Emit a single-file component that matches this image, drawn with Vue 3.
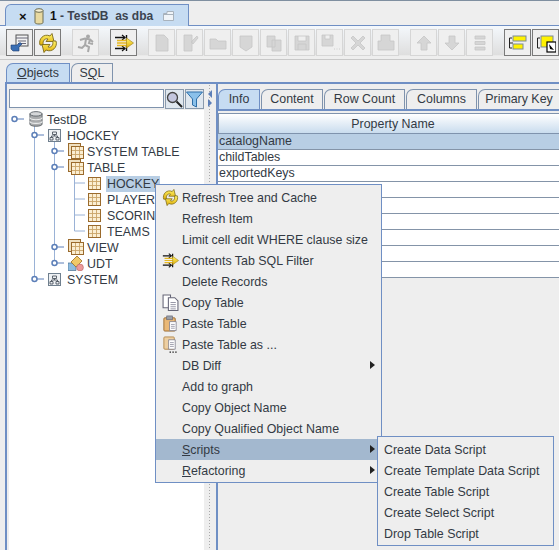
<template>
  <div class="app">
    <svg class="defs" width="0" height="0">
      <defs>
        <linearGradient id="gold" x1="0" y1="0" x2="0" y2="1">
          <stop offset="0" stop-color="#fff46a" />
          <stop offset="1" stop-color="#e0ae08" />
        </linearGradient>
        <symbol id="i-refresh" viewBox="0 0 20 20">
          <path d="M2 12 C0 6 6 0 12 3 L14 0.5 L16 8.5 L8 8.5 L10 6 C7 5 4 8 5.5 12 Z" fill="url(#gold)" stroke="#7d6a18" stroke-width=".9" />
          <path d="M18 8 C20 14 14 20 8 17 L6 19.5 L4 11.5 L12 11.5 L10 14 C13 15 16 12 14.5 8 Z" fill="url(#gold)" stroke="#7d6a18" stroke-width=".9" />
        </symbol>
        <symbol id="i-filter" viewBox="0 0 20 20">
          <path d="M1 4.5 H11 M1 15.5 H11 M12.5 2 V7 M12.5 13 V18" stroke="#111" stroke-width="1.4" />
          <path d="M8 2 L11 4.5 L8 7 M8 13 L11 15.5 L8 18" fill="none" stroke="#111" stroke-width="1.2" />
          <path d="M3 7.5 H13 M3 10 H13 M3 12.5 H13" stroke="#e8b820" stroke-width="1.3" />
          <path d="M12.5 5 L19.5 10 L12.5 15 Z" fill="url(#gold)" stroke="#a88a20" stroke-width=".7" />
        </symbol>
        <symbol id="i-db" viewBox="0 0 15 17">
          <path d="M1 3 V14 C1 17 14 17 14 14 V3 Z" fill="#a9abad" stroke="#60666c" />
          <ellipse cx="7.5" cy="3" rx="6.5" ry="2.4" fill="#d5d7d9" stroke="#60666c" />
          <path d="M1 7 C1 10 14 10 14 7 M1 11 C1 14 14 14 14 11" fill="none" stroke="#eceded" stroke-width="1.2" />
        </symbol>
        <symbol id="i-schema" viewBox="0 0 13 13">
          <rect x=".5" y=".5" width="12" height="12" fill="#eef1f4" stroke="#6f7f8e" />
          <path d="M4.5 3 H8.5 V5.5 H4.5 Z M2 8.5 H5 V11 H2 Z M8 8.5 H11 V11 H8 Z M6.5 5.5 V7 M3.5 8.5 V7 H9.5 V8.5" fill="none" stroke="#4d5660" stroke-width=".9" />
        </symbol>
        <symbol id="i-table" viewBox="0 0 13 13">
          <rect x=".5" y=".5" width="12" height="12" fill="#fbeed2" stroke="#9a6a2c" />
          <path d="M4.5 1 V12 M8.5 1 V12 M1 4.5 H12 M1 8.5 H12" stroke="#c9a468" stroke-width=".9" />
        </symbol>
        <symbol id="i-tables" viewBox="0 0 16 16">
          <rect x=".5" y=".5" width="12" height="12" fill="#efe0c0" stroke="#9a6a2c" />
          <rect x="3.5" y="3.5" width="12" height="12" fill="#fbeed2" stroke="#9a6a2c" />
          <path d="M7.5 4 V15 M11.5 4 V15 M4 7.5 H15 M4 11.5 H15" stroke="#c9a468" stroke-width=".9" />
        </symbol>
        <symbol id="i-udt" viewBox="0 0 16 16">
          <path d="M0 8 H8 V15.5 H0 Z" fill="#8fbce0" stroke="#49708f" stroke-width=".7" />
          <path d="M3 7 L9 1 L14 6 L8 12 Z" fill="#f0c868" stroke="#9a6d20" stroke-width=".8" />
          <circle cx="12" cy="12.5" r="3.4" fill="#ec9a9a" stroke="#b86363" stroke-width=".6" />
        </symbol>
        <symbol id="i-copy" viewBox="0 0 16 16">
          <path d="M1 1 H8 V13 H1 Z" fill="#fff" stroke="#667" />
          <path d="M6 3.5 H12 L15 6.5 V15.5 H6 Z" fill="#fff" stroke="#667" />
          <path d="M8 8 H13 M8 10 H13 M8 12 H13 M8 14 H13" stroke="#889" stroke-width=".8" />
        </symbol>
        <symbol id="i-paste" viewBox="0 0 16 18">
          <rect x="1" y="3" width="12" height="14" rx="1" fill="#e9b877" stroke="#9b6b30" />
          <rect x="4" y="1" width="6" height="4" fill="#9aa0a8" stroke="#667" stroke-width=".7" />
          <path d="M7 7 H14 V16.5 H7 Z" fill="#fff" stroke="#778" stroke-width=".8" />
          <path d="M8.5 10 H12.5 M8.5 12 H12.5 M8.5 14 H12.5" stroke="#889" stroke-width=".8" />
        </symbol>
        <symbol id="i-pastedots" viewBox="0 0 16 18">
          <rect x="1" y="1" width="11" height="13" rx="1" fill="#edcfa2" stroke="#b58a50" />
          <path d="M6 4 H13 V14 H6 Z" fill="#fff" stroke="#778" stroke-width=".8" />
          <path d="M7.5 7 H11.5 M7.5 9 H11.5 M7.5 11 H11.5" stroke="#889" stroke-width=".8" />
          <path d="M7 17 H8.5 M10 17 H11.5 M13 17 H14.5" stroke="#222" stroke-width="1.4" />
        </symbol>
      </defs>
    </svg>

    <div class="doc-bar">
      <div class="doc-tab">
        <span class="doc-x">×</span>
        <svg class="doc-can" width="10" height="17" viewBox="0 0 10 17">
          <path d="M1 2.5 V14.5 C1 16.5 9 16.5 9 14.5 V2.5 Z" fill="#e8d9a0" stroke="#6d6d52" />
          <ellipse cx="5" cy="2.5" rx="4" ry="1.8" fill="#f7efd0" stroke="#6d6d52" />
        </svg>
        <span class="doc-title"><b>1</b> - TestDB&nbsp; as dba</span>
        <svg class="doc-float" width="11" height="10" viewBox="0 0 11 10">
          <path d="M.5 2.5 H4 V.5 H10.5 V9.5 H.5 Z M.5 3.5 H10.5" fill="#f0f4f8" stroke="#a8b2bc" />
        </svg>
      </div>
    </div>

    <div class="toolbar">
      <button class="tb"><svg width="20" height="20" viewBox="0 0 20 20">
        <rect x="6" y="2" width="12" height="11" fill="#f2f2f2" stroke="#555" />
        <path d="M6 5 H18 M8 8 H16 M8 10.5 H16" stroke="#667" />
        <path d="M1 12 H7 L10 9.5 L12 11 L9 14 V18 H3 L1 16 Z" fill="#3b6fb4" stroke="#1e3d6e" stroke-width=".6" />
      </svg></button>
      <button class="tb"><svg width="20" height="20"><use href="#i-refresh" /></svg></button>
      <span class="gap"></span>
      <button class="tb off"><svg width="20" height="20" viewBox="0 0 20 20">
        <circle cx="12" cy="3.5" r="2" fill="#a8a8a8" />
        <path d="M4 7 L9 5.5 L14 6.5 L17 9 M10 6 L9 12 L13 14 L12 19 M9 12 L6 15 L2 14 M14 7 L13 10 L17 11" fill="none" stroke="#a8a8a8" stroke-width="2" />
      </svg></button>
      <span class="gap"></span>
      <button class="tb"><svg width="20" height="20"><use href="#i-filter" /></svg></button>
      <span class="gap"></span>
      <button v-for="g in disabledA" :key="g" class="tb off">
        <svg width="20" height="20" viewBox="0 0 20 20"><path :d="g" fill="#d6d6d6" stroke="#c6c6c6" stroke-width=".8" /></svg>
      </button>
      <span class="gap"></span>
      <button v-for="g in disabledB" :key="g" class="tb off">
        <svg width="20" height="20" viewBox="0 0 20 20"><path :d="g" fill="#d6d6d6" stroke="#c6c6c6" stroke-width=".8" /></svg>
      </button>
      <span class="gap"></span>
      <button class="tb"><svg width="20" height="20" viewBox="0 0 20 20">
        <path d="M4 5 H1.5 V15 H4 M1.5 10 H5" fill="none" stroke="#222" />
        <rect x="5" y="3" width="13" height="5" fill="#fff200" stroke="#7d8a98" />
        <rect x="5" y="11" width="10" height="5" fill="#fff200" stroke="#7d8a98" />
      </svg></button>
      <button class="tb"><svg width="20" height="20" viewBox="0 0 20 20">
        <path d="M4 5 H1.5 V15 H4" fill="none" stroke="#222" />
        <rect x="5" y="3" width="12" height="11" fill="#fff200" stroke="#7d8a98" />
        <rect x="11" y="9" width="9" height="10" fill="#fff" stroke="#000" stroke-width="1.2" />
        <path d="M13 11 L18 17 L14 16 Z" fill="#000" />
      </svg></button>
    </div>

    <div class="obj-tabs">
      <div class="tab on obj"><u>O</u>bjects</div>
      <div class="tab sql">S<u>Q</u>L</div>
    </div>

    <div class="panel">
      <div class="left">
        <div class="search">
          <input class="search-input" type="text" />
          <button class="sbtn"><svg width="17" height="17" viewBox="0 0 17 17">
            <circle cx="6.5" cy="6.5" r="5" fill="#c3c6de" stroke="#444" stroke-width="1.3" />
            <path d="M10.5 10.5 L16 16" stroke="#222" stroke-width="2" />
          </svg></button>
          <button class="sbtn"><svg width="17" height="17" viewBox="0 0 17 17">
            <path d="M.5 1 H16.5 L10.5 8 V16 L6.5 14 V8 Z" fill="#8ac0ea" stroke="#2f6fa8" />
          </svg></button>
        </div>
        <div class="tree">
          <svg class="tree-lines" width="100" height="190" viewBox="0 0 100 190">
            <g fill="none" stroke="#9ab2d6">
              <path d="M25.5 9 V169 M45.5 25 V153 M65.5 57 V121 M65.5 73 H76 M65.5 89 H76 M65.5 105 H76 M65.5 121 H76" />
              <path d="M5.5 9 H15 M25.5 25 H35 M45.5 41 H55 M45.5 57 H55 M45.5 137 H55 M45.5 153 H55 M25.5 169 H35" stroke="#5c7fb8" />
            </g>
            <g fill="#fff" stroke="#5c7fb8" stroke-width="1.5">
              <circle cx="5.5" cy="9" r="2.5" />
              <circle cx="25.5" cy="25" r="2.5" />
              <circle cx="45.5" cy="41" r="2.5" />
              <circle cx="45.5" cy="57" r="2.5" />
              <circle cx="45.5" cy="137" r="2.5" />
              <circle cx="45.5" cy="153" r="2.5" />
              <circle cx="25.5" cy="169" r="2.5" />
            </g>
          </svg>
          <div v-for="n in nodes" :key="n.id" class="node" :class="'lv' + n.level">
            <svg class="node-icon" :class="'ic-' + n.icon"><use :href="'#i-' + n.icon" /></svg>
            <span class="node-label" :class="{ sel: n.selected }">{{ n.label }}</span>
          </div>
        </div>
      </div>

      <div class="splitter">
        <i class="arrow-l"></i>
        <i class="arrow-r"></i>
      </div>

      <div class="right">
        <div class="info-tabs">
          <div v-for="(t, i) in infoTabs" :key="t.label" class="tab" :class="{ on: i === 0 }" :style="{ width: t.width + 'px' }">{{ t.label }}</div>
        </div>
        <div class="info-body">
          <div class="th">Property Name</div>
          <div v-for="(r, i) in rows" :key="i" class="tr" :class="{ hi: i === 0 }">{{ r }}</div>
        </div>
      </div>
    </div>

    <div class="menu main-menu">
      <div v-for="m in menuItems" :key="m.label" class="item" :class="{ active: m.active }">
        <svg v-if="m.icon" class="item-icon" width="17" height="17"><use :href="'#i-' + m.icon" /></svg>
        <span><u v-if="m.mnemonic">{{ m.mnemonic }}</u>{{ m.label }}</span>
        <i v-if="m.sub" class="caret"></i>
      </div>
    </div>
    <div class="menu sub-menu">
      <div v-for="s in subItems" :key="s" class="item">{{ s }}</div>
    </div>
  </div>
</template>

<script setup>
const disabledA = [
  "M4 2 H12 L16 6 V18 H4 Z",
  "M4 2 H12 V18 H4 Z M11 9 L17 3 L18 5 L13 11 Z",
  "M2 6 H8 L10 8 H18 V16 H2 Z",
  "M4 3 H16 V14 L10 18 L4 14 Z",
  "M3 3 H11 V14 H3 Z M8 7 H17 V18 H8 Z",
  "M3 3 H17 V17 H3 Z M6 3 V8 H14 V3 M6 17 V11 H14 V17",
  "M2 2 H13 V13 H2 Z M5 2 V6 H10 V2 M14 16 H15 M16.5 16 H17.5 M19 16 H20",
  "M3 5 L5 3 L10 8 L15 3 L17 5 L12 10 L17 15 L15 17 L10 12 L5 17 L3 15 L8 10 Z",
  "M5 2 H14 V8 H18 V17 H2 V8 H5 Z",
]
const disabledB = [
  "M10 3 L17 10 H13 V17 H7 V10 H3 Z",
  "M7 3 H13 V10 H17 L10 17 L3 10 H7 Z",
  "M5 3 H15 V6 H5 Z M5 8.5 H15 V11.5 H5 Z M5 14 H15 V17 H5 Z",
]

const nodes = [
  { id: 1, level: 0, icon: "db", label: "TestDB" },
  { id: 2, level: 1, icon: "schema", label: "HOCKEY" },
  { id: 3, level: 2, icon: "tables", label: "SYSTEM TABLE" },
  { id: 4, level: 2, icon: "tables", label: "TABLE" },
  { id: 5, level: 3, icon: "table", label: "HOCKEY", selected: true },
  { id: 6, level: 3, icon: "table", label: "PLAYERS" },
  { id: 7, level: 3, icon: "table", label: "SCORING" },
  { id: 8, level: 3, icon: "table", label: "TEAMS" },
  { id: 9, level: 2, icon: "tables", label: "VIEW" },
  { id: 10, level: 2, icon: "udt", label: "UDT" },
  { id: 11, level: 1, icon: "schema", label: "SYSTEM" },
]

const infoTabs = [
  { label: "Info", width: 42 },
  { label: "Content", width: 62 },
  { label: "Row Count", width: 81 },
  { label: "Columns", width: 71 },
  { label: "Primary Key", width: 82 },
]

const rows = ["catalogName", "childTables", "exportedKeys", "", "", "", "", "", ""]

const menuItems = [
  { label: "Refresh Tree and Cache", icon: "refresh" },
  { label: "Refresh Item" },
  { label: "Limit cell edit WHERE clause size" },
  { label: "Contents Tab SQL Filter", icon: "filter" },
  { label: "Delete Records" },
  { label: "Copy Table", icon: "copy" },
  { label: "Paste Table", icon: "paste" },
  { label: "Paste Table as ...", icon: "pastedots" },
  { label: "DB Diff", sub: true },
  { label: "Add to graph" },
  { label: "Copy Object Name" },
  { label: "Copy Qualified Object Name" },
  { label: "cripts", mnemonic: "S", sub: true, active: true },
  { label: "efactoring", mnemonic: "R", sub: true },
]

const subItems = [
  "Create Data Script",
  "Create Template Data Script",
  "Create Table Script",
  "Create Select Script",
  "Drop Table Script",
]
</script>

<style>
html, body, #app {
  height: 100%;
  margin: 0;
}
</style>

<style scoped>
.app {
  position: relative;
  width: 559px;
  height: 550px;
  overflow: hidden;
  display: flex;
  flex-direction: column;
  background: #eeeeee;
  color: #333a44;
  font-family: "Liberation Sans", Arial, sans-serif;
  font-size: 12.4px;
}
.defs {
  position: absolute;
}
.doc-bar {
  height: 26px;
  box-sizing: border-box;
  padding: 3px 0 0 5px;
  border-top: 1px solid #7f8fa0;
  border-bottom: 1px solid #6f8fc4;
  display: flex;
  flex-shrink: 0;
}
.doc-tab {
  width: 184px;
  height: 23px;
  box-sizing: border-box;
  border: 1px solid #6f8fc4;
  border-bottom: none;
  border-radius: 6px 0 0 0;
  background: #c6dcf2;
  display: flex;
  align-items: center;
  padding-left: 13px;
  margin-bottom: -1px;
}
.doc-x {
  font-weight: bold;
  font-size: 13px;
  color: #111;
  width: 12px;
}
.doc-can {
  margin-left: 3px;
}
.doc-title {
  margin-left: 6px;
  font-size: 12px;
  font-weight: bold;
  white-space: nowrap;
  color: #3c4450;
}
.doc-title b {
  color: #111;
}
.doc-float {
  margin-left: 10px;
}
.toolbar {
  height: 34px;
  box-sizing: border-box;
  padding: 3px 0 0 6px;
  display: flex;
  align-items: flex-start;
  flex-shrink: 0;
  background: linear-gradient(#f4f8fc, #dedede 88%, #eeeeee 90%);
  border-bottom: 1px solid #c8c8c8;
}
.tb {
  width: 27px;
  height: 27px;
  margin-right: 1px;
  padding: 0;
  flex-shrink: 0;
  box-sizing: border-box;
  border: 1px solid #7a7a7a;
  background: #efefef;
  display: flex;
  align-items: center;
  justify-content: center;
}
.tb.off {
  border-color: #d6d6d6;
}
.gap {
  width: 10px;
  flex-shrink: 0;
}
.obj-tabs {
  height: 22px;
  box-sizing: border-box;
  padding: 3px 0 0 6px;
  display: flex;
  flex-shrink: 0;
}
.tab {
  height: 20px;
  box-sizing: border-box;
  border: 1px solid #7f93ad;
  border-bottom: none;
  border-radius: 7px 0 0 0;
  margin-right: 1px;
  padding-bottom: 1px;
  display: flex;
  align-items: center;
  justify-content: center;
  white-space: nowrap;
}
.tab.on {
  background: #c6dcf2;
  border-color: #6f8fc4;
}
.tab.obj {
  width: 64px;
}
.tab.sql {
  width: 42px;
}
.panel {
  flex: 1;
  min-height: 0;
  margin-left: 5px;
  box-sizing: border-box;
  border-top: 2px solid #6f8fc4;
  border-left: 2px solid #6f8fc4;
  display: flex;
  background: #eeeeee;
}
.left {
  width: 197px;
  flex-shrink: 0;
  padding: 5px 0 0 2px;
  box-sizing: border-box;
  display: flex;
  flex-direction: column;
}
.search {
  height: 21px;
  display: flex;
  gap: 1px;
}
.search-input {
  width: 155px;
  height: 19px;
  margin: 0;
  padding: 0;
  box-sizing: border-box;
  border: 1px solid #7f93ad;
  background: #fff;
}
.sbtn {
  width: 19px;
  height: 20px;
  padding: 0;
  box-sizing: border-box;
  border: 1px solid #8a9aac;
  background: #dfe7ef;
  display: flex;
  align-items: center;
  justify-content: center;
}
.tree {
  position: relative;
  flex: 1;
  background: #fff;
  padding-top: 2px;
}
.tree-lines {
  position: absolute;
  left: 0;
  top: 0;
}
.node {
  height: 16px;
  display: flex;
  align-items: center;
  position: relative;
}
.lv0 { padding-left: 20px; }
.lv1 { padding-left: 39px; }
.lv2 { padding-left: 59px; }
.lv3 { padding-left: 79px; }
.node-icon {
  width: 13px;
  height: 13px;
  flex-shrink: 0;
  margin: 0 5px 2px 0;
}
.ic-db {
  width: 14px;
  height: 16px;
  margin-right: 3px;
}
.ic-tables,
.ic-udt {
  width: 16px;
  height: 16px;
  margin-right: 2px;
}
.node-label {
  padding: 0 1px;
  line-height: 16px;
  white-space: nowrap;
}
.node-label.sel {
  background: #b8cee4;
}
.splitter {
  width: 12px;
  flex-shrink: 0;
  position: relative;
  background-image: radial-gradient(#a9a9a9 0.6px, transparent 0.8px);
  background-size: 3px 3px;
  background-position: 4px 0;
  background-repeat: repeat-y;
}
.arrow-l, .arrow-r {
  position: absolute;
  left: 4px;
  width: 0;
  height: 0;
  border-top: 4px solid transparent;
  border-bottom: 4px solid transparent;
}
.arrow-l {
  top: 6px;
  border-right: 4px solid #5c7fb8;
}
.arrow-r {
  top: 15px;
  border-left: 4px solid #5c7fb8;
}
.right {
  flex: 1;
  min-width: 0;
  border-left: 2px solid #6f8fc4;
  padding-top: 5px;
  display: flex;
  flex-direction: column;
}
.info-tabs {
  height: 20px;
  display: flex;
  flex-shrink: 0;
  border-bottom: 2px solid #6f8fc4;
  overflow: hidden;
}
.info-tabs .tab {
  flex-shrink: 0;
}
.info-body {
  padding-top: 2px;
  min-height: 0;
}
.th {
  height: 21px;
  box-sizing: border-box;
  border: 1px solid #7f93ad;
  border-right: none;
  padding-left: 8px;
  background: linear-gradient(#ffffff, #c9dcee);
  text-align: center;
  line-height: 20px;
}
.tr {
  height: 16px;
  box-sizing: border-box;
  padding-left: 1px;
  background: #fff;
  border-bottom: 1px solid #8494a8;
  line-height: 15px;
}
.tr.hi {
  background: #b8cee4;
}
.menu {
  position: absolute;
  box-sizing: border-box;
  border: 1px solid #6f8fc4;
  background: #eeeeee;
}
.main-menu {
  left: 155px;
  top: 184px;
  width: 227px;
  height: 299px;
}
.sub-menu {
  left: 377px;
  top: 436px;
  width: 177px;
  height: 110px;
  padding-top: 2px;
}
.item {
  height: 21px;
  position: relative;
  line-height: 23px;
  white-space: nowrap;
}
.main-menu .item {
  padding-left: 26px;
}
.sub-menu .item {
  padding-left: 6px;
}
.main-menu .item:first-child {
  margin-top: 2px;
}
.item.active {
  background: #a3b8cf;
}
.item-icon {
  position: absolute;
  left: 6px;
  top: 2px;
}
.caret {
  position: absolute;
  right: 6px;
  top: 6px;
  width: 0;
  height: 0;
  border-top: 4px solid transparent;
  border-bottom: 4px solid transparent;
  border-left: 5px solid #222;
}
</style>
